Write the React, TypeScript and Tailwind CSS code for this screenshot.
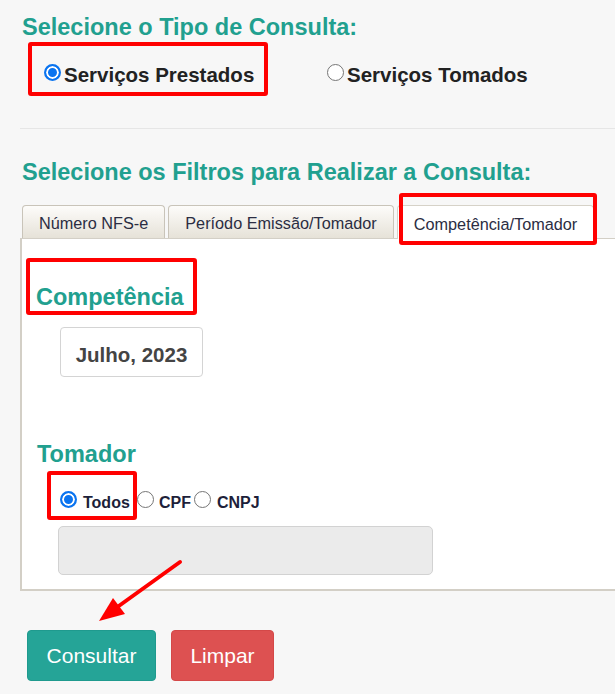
import { useState } from 'react'

const TABS = ['Número NFS-e', 'Período Emissão/Tomador', 'Competência/Tomador']

// native-looking radio drawn with CSS so it can be sized freely
const radio =
  "mt-px h-[17px] w-[17px] shrink-0 cursor-pointer appearance-none rounded-full border border-[#767676] bg-white checked:border-2 checked:border-[#0a74f0] checked:bg-[#0a74f0] checked:shadow-[inset_0_0_0_2px_#fff]"

export default function App() {
  const [tipo, setTipo] = useState<'prestados' | 'tomados'>('prestados')
  const [tomador, setTomador] = useState<'todos' | 'cpf' | 'cnpj'>('todos')
  const [tab, setTab] = useState(2)

  return (
    <div className="relative min-h-screen w-full overflow-hidden bg-[#f7f7f7] pt-[13px] font-['Liberation_Sans',Arial,sans-serif]">
      <h2 className="ml-[22px] text-[23.5px] font-bold leading-[28px] text-[#21a08f]">
        Selecione o Tipo de Consulta:
      </h2>

      {/* Tipo de consulta */}
      <div className="ml-[28px] mt-px flex items-start">
        <label className="flex h-[54px] w-[240px] cursor-pointer items-start gap-[3px] rounded-[3px] border-4 border-[#f00] pl-[12px] pt-[17px]">
          <input
            type="radio"
            name="tipo"
            checked={tipo === 'prestados'}
            onChange={() => setTipo('prestados')}
            className={radio}
          />
          <span className="text-[20.5px] font-bold leading-[24px] text-[#222]">Serviços Prestados</span>
        </label>
        <label className="ml-[59px] flex cursor-pointer items-start gap-[3px] pt-[21px]">
          <input
            type="radio"
            name="tipo"
            checked={tipo === 'tomados'}
            onChange={() => setTipo('tomados')}
            className={radio}
          />
          <span className="text-[20.5px] font-bold leading-[24px] text-[#222]">Serviços Tomados</span>
        </label>
      </div>

      <div className="ml-[20px] mt-[32px] h-px bg-[#e6e6e6]" />

      <h2 className="ml-[22px] mt-[29px] text-[23.5px] font-bold leading-[28px] text-[#21a08f]">
        Selecione os Filtros para Realizar a Consulta:
      </h2>

      {/* Abas */}
      <div className="relative z-10 ml-[22px] mt-[19px] flex items-end gap-[3px]">
        {TABS.map((t, i) =>
          i === tab ? (
            <button
              key={t}
              onClick={() => setTab(i)}
              className="relative -mb-px h-[34px] rounded-t-[4px] border border-b-0 border-[#d6d2c8] bg-white px-[16px] pt-[2px] text-[16.25px] leading-[20px] text-[#2b2d42]"
            >
              {t}
              <span className="pointer-events-none absolute -bottom-[6px] -right-[4px] -top-[13px] left-[1px] rounded-[3px] border-4 border-[#f00]" />
            </button>
          ) : (
            <button
              key={t}
              onClick={() => setTab(i)}
              className="h-[33px] rounded-t-[4px] border border-b-0 border-[#c9c4b9] bg-linear-to-b from-[#fdfcfa] to-[#e6e2d8] px-[16px] pt-[2px] text-[16.25px] leading-[20px] text-[#2b2d42]"
            >
              {t}
            </button>
          ),
        )}
      </div>

      {/* Painel da aba */}
      <div className="ml-[20px] border-b-2 border-l-2 border-t border-[#d3cfc6] bg-white pb-[14px]">
        <div className="ml-[4px] mt-[19px] h-[57px] w-[171px] rounded-[3px] border-4 border-[#f00] pl-[6px] pt-[21px]">
          <h3 className="text-[23.5px] font-bold leading-[28px] text-[#21a08f]">Competência</h3>
        </div>

        <input
          readOnly
          value="Julho, 2023"
          className="ml-[38px] mt-[12px] block h-[50px] w-[143px] rounded-[4px] border border-[#d4d4d4] bg-white pt-[6px] text-center text-[20.5px] font-bold text-[#444] outline-none"
        />

        <h3 className="ml-[15px] mt-[63px] text-[23.5px] font-bold leading-[28px] text-[#21a08f]">Tomador</h3>

        <div className="ml-[25px] mt-[3px] flex items-start">
          <label className="flex h-[49px] w-[90px] cursor-pointer items-start gap-[6px] rounded-[3px] border-4 border-[#f00] pl-[9px] pt-[15px]">
            <input
              type="radio"
              name="tomador"
              checked={tomador === 'todos'}
              onChange={() => setTomador('todos')}
              className={radio}
            />
            <span className="mt-[3px] text-[16px] font-bold leading-[20px] text-[#1d1f3a]">Todos</span>
          </label>
          <div className="flex items-start pt-[19px]">
            <label className="flex cursor-pointer items-start gap-[5px]">
              <input
                type="radio"
                name="tomador"
                checked={tomador === 'cpf'}
                onChange={() => setTomador('cpf')}
                className={radio}
              />
              <span className="mt-[3px] text-[16px] font-bold leading-[20px] text-[#1d1f3a]">CPF</span>
            </label>
            <label className="ml-[3px] flex cursor-pointer items-start gap-[6px]">
              <input
                type="radio"
                name="tomador"
                checked={tomador === 'cnpj'}
                onChange={() => setTomador('cnpj')}
                className={radio}
              />
              <span className="mt-[3px] text-[16px] font-bold leading-[20px] text-[#1d1f3a]">CNPJ</span>
            </label>
          </div>
        </div>

        <input
          disabled
          className="ml-[36px] mt-[6px] block h-[49px] w-[375px] rounded-[5px] border border-[#d2d2d2] bg-[#ebebeb]"
        />
      </div>

      <div className="ml-[27px] mt-[39px] flex gap-[15px]">
        <button className="h-[51px] w-[129px] rounded-[4px] border border-[#1f9a8e] bg-[#25a497] text-[21px] text-white">
          Consultar
        </button>
        <button className="h-[51px] w-[103px] rounded-[4px] border border-[#d44848] bg-[#dd5151] text-[21px] text-white">
          Limpar
        </button>
      </div>

      {/* seta apontando para o botão */}
      <svg className="pointer-events-none absolute left-0 top-0" width="615" height="694" viewBox="0 0 615 694">
        <line x1="180" y1="562" x2="116" y2="608" stroke="#f00" strokeWidth="4" strokeLinecap="round" />
        <polygon points="99,621 113,598 125,614" fill="#f00" />
      </svg>
    </div>
  )
}
